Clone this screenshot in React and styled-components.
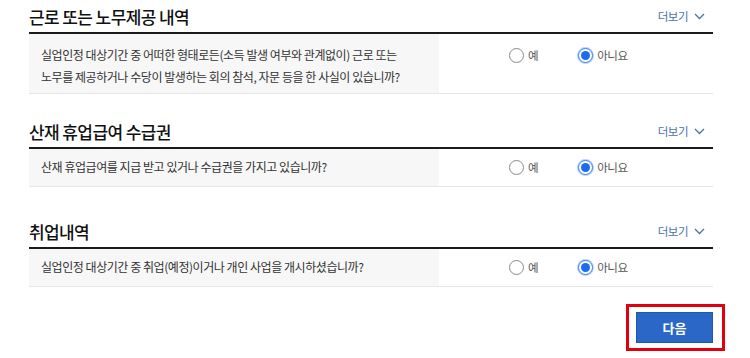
import React from "react";
import styled, { createGlobalStyle } from "styled-components";

const GlobalStyle = createGlobalStyle`
    body {
        margin: 0;
        background: #fff;
        font-family: "Noto Sans CJK KR", "Noto Sans", sans-serif;
    }
`;

const Container = styled.div`
    width: 750px;
    padding: 0 37px 0 29px;
    box-sizing: border-box;
`;

const Section = styled.section`
    margin-top: ${(props) => props.$top || 0}px;
`;

const SectionHeader = styled.div`
    height: 32px;
    display: flex;
    align-items: center;
    justify-content: space-between;
    border-bottom: 2px solid #1a1a1a;
`;

const Title = styled.h3`
    margin: 0;
    font-size: 17px;
    font-weight: 500;
    color: #111;
    letter-spacing: -0.6px;
`;

const MoreButton = styled.button`
    display: flex;
    align-items: center;
    gap: 6px;
    margin-right: 8px;
    padding: 0;
    border: none;
    background: none;
    font-family: inherit;
    font-size: 11.5px;
    letter-spacing: -0.5px;
    color: #4d6fae;
    cursor: pointer;
`;

const Row = styled.div`
    display: flex;
    border-bottom: 1px solid #e6e6e6;
`;

const Question = styled.div`
    width: 410px;
    box-sizing: border-box;
    padding: ${(props) => (props.$tall ? "10px 12px 5px" : "7px 12px 8px")};
    background: #f7f7f7;
    font-size: 12px;
    letter-spacing: -0.45px;
    line-height: 22px;
    color: #333;
`;

const Options = styled.div`
    display: flex;
    align-items: flex-start;
    gap: 40px;
    padding: ${(props) => (props.$tall ? "10px 0 0 70px" : "7px 0 0 70px")};
`;

const Option = styled.label`
    display: flex;
    align-items: center;
    height: 22px;
    gap: 4px;
    font-size: 11.5px;
    letter-spacing: -0.4px;
    color: #555;
    cursor: pointer;
`;

const RadioMark = styled.span`
    width: 15px;
    height: 15px;
    box-sizing: border-box;
    border-radius: 50%;
    border: 1px solid ${(props) => (props.$checked ? "#3d7ef0" : "#8a8a8a")};
    box-shadow: ${(props) => (props.$checked ? "0 0 0 1px rgba(61, 126, 240, 0.35)" : "none")};
    display: flex;
    align-items: center;
    justify-content: center;
    background: #fff;

    &::after {
        content: "";
        width: 9px;
        height: 9px;
        border-radius: 50%;
        background: ${(props) => (props.$checked ? "#1b6cf0" : "transparent")};
    }
`;

const Footer = styled.div`
    display: flex;
    justify-content: flex-end;
    margin-top: 17px;
`;

const Highlight = styled.div`
    border: 3px solid #e2000f;
    padding: 5px 9px 5px 7px;
    margin-right: -12px;
`;

const NextButton = styled.button`
    width: 77px;
    height: 31px;
    border: 1px solid #1f58b0;
    background: #2a67c6;
    color: #fff;
    font-family: inherit;
    font-size: 13px;
    font-weight: 700;
    display: block;
    cursor: pointer;
`;

const Chevron = () => (
    <svg width="11" height="7" viewBox="0 0 11 7">
        <polyline points="1,1 5.5,5.5 10,1" fill="none" stroke="#4d6fae" strokeWidth="1.3" />
    </svg>
);

const sections = [
    {
        title: "근로 또는 노무제공 내역",
        top: 0,
        tall: true,
        question: (
            <>
                실업인정 대상기간 중 어떠한 형태로든(소득 발생 여부와 관계없이) 근로 또는
                <br />
                노무를 제공하거나 수당이 발생하는 회의 참석, 자문 등을 한 사실이 있습니까?
            </>
        ),
    },
    {
        title: "산재 휴업급여 수급권",
        top: 21,
        question: "산재 휴업급여를 지급 받고 있거나 수급권을 가지고 있습니까?",
    },
    {
        title: "취업내역",
        top: 28,
        question: "실업인정 대상기간 중 취업(예정)이거나 개인 사업을 개시하셨습니까?",
    },
];

const App = () => {
    return (
        <>
            <GlobalStyle />
            <Container>
                {sections.map((section, idx) => (
                    <Section key={idx} $top={section.top}>
                        <SectionHeader>
                            <Title>{section.title}</Title>
                            <MoreButton type="button">
                                더보기 <Chevron />
                            </MoreButton>
                        </SectionHeader>
                        <Row>
                            <Question $tall={section.tall}>{section.question}</Question>
                            <Options $tall={section.tall}>
                                <Option>
                                    <RadioMark />
                                    예
                                </Option>
                                <Option>
                                    <RadioMark $checked />
                                    아니요
                                </Option>
                            </Options>
                        </Row>
                    </Section>
                ))}
                <Footer>
                    <Highlight>
                        <NextButton type="button">다음</NextButton>
                    </Highlight>
                </Footer>
            </Container>
        </>
    );
};

export default App;
